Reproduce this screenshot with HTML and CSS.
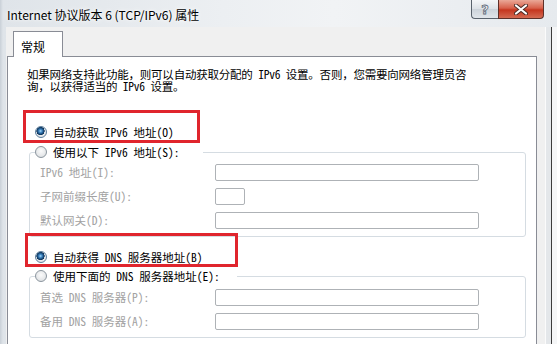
FILE: index.html
```html
<!DOCTYPE html>
<html lang="zh-CN">
<head>
<meta charset="utf-8">
<link rel="stylesheet" href="styles.css">
</head>
<body>
<div class="window">
  <div class="titlebar">
    <div class="title">Internet 协议版本 6 (TCP/IPv6) 属性</div>
    <div class="caption">
      <div class="cbtn help"><span>?</span></div>
      <div class="cbtn close">
        <svg width="14" height="11" viewBox="0 0 14 11">
          <path d="M2 1.5 L12 9.5 M12 1.5 L2 9.5" stroke="#4a2a25" stroke-width="4" stroke-linecap="round"/>
          <path d="M2 1.5 L12 9.5 M12 1.5 L2 9.5" stroke="#ffffff" stroke-width="2.2" stroke-linecap="round"/>
        </svg>
      </div>
    </div>
  </div>
  <div class="body">
    <div class="frame-left"></div>
    <div class="client">
      <div class="tabs"><div class="tab">常规</div></div>
      <div class="panel">
        <p class="intro">如果网络支持此功能，则可以自动获取分配的 IPv6 设置。否则，您需要向网络管理员咨<br>询，以获得适当的 IPv6 设置。</p>

        <div class="radio-row"><span class="radio checked"></span><span class="rtext">自动获取 IPv6 地址(O)</span></div>

        <fieldset class="group g1">
          <legend class="legend l1"><span class="radio"></span><span class="rtext">使用以下 IPv6 地址(S):</span></legend>
          <div class="row"><span class="lbl">IPv6 地址(I):</span><span class="input wide"></span></div>
          <div class="row"><span class="lbl">子网前缀长度(U):</span><span class="input small"></span></div>
          <div class="row"><span class="lbl">默认网关(D):</span><span class="input wide"></span></div>
        </fieldset>

        <div class="radio-row r3"><span class="radio checked"></span><span class="rtext">自动获得 DNS 服务器地址(B)</span></div>

        <fieldset class="group g2">
          <legend class="legend l2"><span class="radio"></span><span class="rtext">使用下面的 DNS 服务器地址(E):</span></legend>
          <div class="row"><span class="lbl">首选 DNS 服务器(P):</span><span class="input wide"></span></div>
          <div class="row"><span class="lbl">备用 DNS 服务器(A):</span><span class="input wide"></span></div>
        </fieldset>

        <div class="mark mark1"></div>
        <div class="mark mark2"></div>
      </div>
    </div>
    <div class="frame-right"></div>
  </div>
</div>
</body>
</html>
```
FILE: styles.css
```css
* { box-sizing: border-box; }
html, body { margin: 0; padding: 0; }
body {
  width: 557px;
  height: 344px;
  overflow: hidden;
  background: #f3f5f7;
  font-family: "Noto Sans Mono CJK SC", "Noto Sans CJK SC", sans-serif;
  font-size: 11.5px;
  color: #000;
}
.window {
  width: 557px;
  height: 344px;
  display: flex;
  flex-direction: column;
  background: linear-gradient(to right, #c9d0d7 0, #dfe4e9 3px, #eceff2 40%, #f1f3f5 60%, #e6eaee 100%);
}
.titlebar {
  height: 27px;
  flex: none;
  display: flex;
  justify-content: space-between;
  align-items: flex-start;
  padding-left: 7px;
}
.title {
  margin-top: 6px;
  font-family: "Noto Sans CJK SC", sans-serif;
  font-size: 12px;
  line-height: 18px;
  color: #000;
  text-shadow: 0 0 6px #fff, 0 0 3px #fff;
}
.caption {
  display: flex;
  margin-right: 13px;
}
.cbtn {
  height: 19px;
  display: flex;
  align-items: center;
  justify-content: center;
  border: 1px solid #59626c;
  border-top: none;
}
.help {
  width: 27px;
  border-right: none;
  border-radius: 0 0 0 4px;
  background: linear-gradient(#f4f6f8, #dde2e7 48%, #ccd3da 52%, #e0e5ea);
}
.help span {
  font-family: "DejaVu Sans", sans-serif;
  font-weight: bold;
  font-size: 13px;
  line-height: 13px;
  color: #f2f4f6;
  -webkit-text-stroke: 0.8px #5d6978;
}
.close {
  width: 46px;
  border-color: #5e3029;
  border-radius: 0 0 4px 0;
  background: linear-gradient(#eaa897, #d7604a 45%, #c5361f 55%, #d46a52);
}
.body {
  flex: 1;
  display: flex;
  min-height: 0;
}
.frame-left { width: 6px; flex: none; }
.client {
  width: 540px;
  flex: none;
  display: flex;
  flex-direction: column;
  background: #f0f0f0;
  padding: 4px 8px 0 1px;
  border-right: 1px solid #fbfbfb;
}
.frame-right {
  flex: 1;
  background: linear-gradient(to right, #e4e7ea 0, #e4e7ea 5px, #3c3c3c 5px, #3c3c3c 6px, #f5f6f7 6px);
}
.tabs {
  display: flex;
  padding-left: 6px;
  position: relative;
  z-index: 1;
}
.tab {
  width: 50px;
  height: 26px;
  margin-bottom: -1px;
  border: 1px solid #898c95;
  border-bottom: none;
  background: #fff;
  padding: 9px 0 0 7px;
  line-height: 12px;
  font-size: 12px;
}
.panel {
  flex: 1;
  position: relative;
  background: #fff;
  border: 1px solid #898c95;
  border-bottom: none;
}
.intro {
  margin: 11px 0 0 19px;
  line-height: 12px;
  letter-spacing: -0.22px;
  white-space: nowrap;
}
.radio-row {
  display: flex;
  align-items: center;
  height: 12px;
  margin: 34px 0 0 27px;
  line-height: 12px;
}
.radio-row.r3 { margin-top: 14px; }
.radio {
  width: 12px;
  height: 12px;
  flex: none;
  border-radius: 50%;
  border: 1px solid #8b959e;
  background: radial-gradient(circle at 50% 40%, #fbfbfb 0, #e6e8ea 60%, #d4d7da 100%);
}
.radio.checked {
  border-color: #5e7f9c;
  background:
    radial-gradient(circle at 45% 40%, #a8dcf8 0, #3f86c3 1.6px, #123f6b 3.4px, #0d3358 3.9px, rgba(13,51,88,0) 4.3px),
    radial-gradient(circle at 50% 40%, #fbfbfb 0, #e4e7ea 70%, #d4d7da 100%);
}
.rtext {
  margin-left: 6px;
  white-space: nowrap;
}
.group {
  margin: 8px 0 0 21px;
  width: 497px;
  padding: 2px 0 4px 0;
  border: 1px solid #d5dce2;
  border-radius: 3px;
  min-width: 0;
}
.group.g2 { margin-top: 7px; padding-top: 3px; }
.legend {
  display: flex;
  align-items: center;
  height: 12px;
  line-height: 12px;
  margin-left: 5px;
  padding: 0;
}
.legend.l1 { width: 168px; }
.legend.l2 { width: 202px; }
.row {
  display: flex;
  align-items: center;
  height: 24px;
  margin-left: 10px;
}
.lbl {
  width: 175px;
  flex: none;
  color: #a2a2a2;
  white-space: nowrap;
}
.input {
  height: 17px;
  border: 1px solid #aeb2b6;
  border-radius: 2px;
  background: #fff;
}
.input.wide { width: 264px; }
.input.small { width: 30px; }
.mark {
  position: absolute;
  border: 3px solid #e0252d;
}
.mark1 { left: 15px; top: 53px; width: 177px; height: 33px; }
.mark2 { left: 17px; top: 176px; width: 213px; height: 34px; }
```
